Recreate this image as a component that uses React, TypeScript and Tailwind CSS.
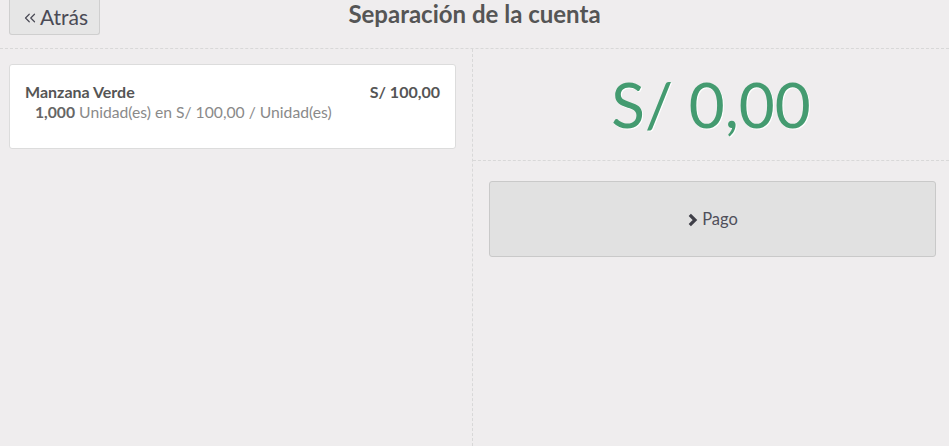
import { ChevronsLeft } from "lucide-react";

const FONT = { fontFamily: "Lato, 'Open Sans', sans-serif" };

function Chevron() {
  return (
    <svg width="11" height="14" viewBox="0 0 11 14" className="mr-[4px] mt-[1px]">
      <polyline points="2.8,1.8 8,7 2.8,12.2" fill="none" stroke="#3f3f48" strokeWidth="3.2" strokeLinejoin="miter" />
    </svg>
  );
}

export default function App() {
  return (
    <div className="h-[446px] w-full overflow-hidden bg-[#efedee] text-[#555]" style={FONT}>
      <header className="grid h-[49px] grid-cols-[1fr_auto_1fr] items-start border-b border-dashed border-[#d8d8d8]">
        <div className="pl-[9px]">
          <button
            type="button"
            className="flex h-[35px] w-[91px] items-center justify-center rounded-b-[3px] border border-t-0 border-[#cfcfcf] bg-[#e6e6e6] pb-px text-[21px] text-[#4a4a55]"
          >
            <ChevronsLeft size={18} strokeWidth={1.6} className="mr-[1px] mt-[2px]" />
            Atrás
          </button>
        </div>
        <h1 className="text-[24px] font-bold leading-[27px] text-[#555]">Separación de la cuenta</h1>
        <div />
      </header>

      <div className="flex h-[397px]">
        <section className="w-[473px] border-r border-dashed border-[#d8d8d8] pl-[9px] pr-4 pt-[15px]">
          <div className="rounded-[3px] border border-[#dcdcdc] bg-white px-[15px] pb-[25px] pt-[16px] text-[16px] leading-[21px]">
            <div className="flex justify-between font-bold text-[#555]">
              <span>Manzana Verde</span>
              <span>S/ 100,00</span>
            </div>
            <div className="pl-[10px] text-[15.7px] text-[#8a8a8a]">
              <span className="font-bold text-[#666]">1,000</span> Unidad(es) en S/ 100,00 / Unidad(es)
            </div>
          </div>
        </section>

        <section className="flex-1">
          <div className="flex h-[112px] items-center justify-center border-b border-dashed border-[#d8d8d8]">
            <span
              className="pb-[2px] text-[62px] leading-none text-[#449b70]"
              style={{ textShadow: "1px 1px 0 #ffffff" }}
            >
              S/ 0,00
            </span>
          </div>
          <div className="ml-4 mr-[13px] mt-5">
            <button
              type="button"
              className="flex h-[76px] w-full items-center justify-center rounded-[3px] border border-[#c9c9c9] bg-[#e1e1e1] text-[16.5px] text-[#4f4f5a]"
            >
              <Chevron />
              Pago
            </button>
          </div>
        </section>
      </div>
    </div>
  );
}
